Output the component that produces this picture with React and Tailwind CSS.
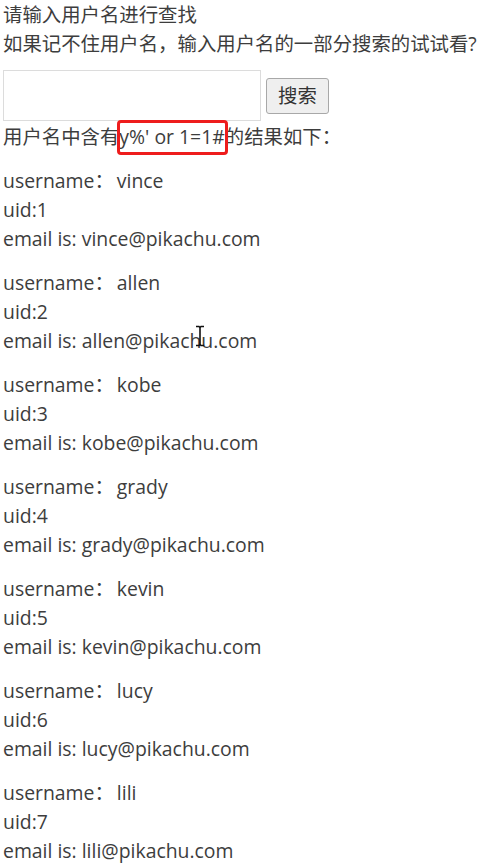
import React from 'react';

const users = [
  { name: 'vince', uid: 1 },
  { name: 'allen', uid: 2 },
  { name: 'kobe', uid: 3 },
  { name: 'grady', uid: 4 },
  { name: 'kevin', uid: 5 },
  { name: 'lucy', uid: 6 },
  { name: 'lili', uid: 7 },
];

const font = { fontFamily: '"Open Sans", "Noto Sans CJK SC", sans-serif' };

// text cursor (I-beam) that sits over the page in the screenshot
function IBeam() {
  return (
    <svg
      className="absolute left-[195px] top-[325px]"
      width="10"
      height="22"
      viewBox="0 0 10 22"
    >
      <path
        d="M1 1.5h3l1 1 1-1h3M5 2.5v17M1 20.5h3l1-1 1 1h3"
        fill="none"
        stroke="#111"
        strokeWidth="1.6"
      />
    </svg>
  );
}

export default function App() {
  return (
    <div
      className="relative bg-white text-[#3d3d3d] text-[19.4px] leading-[29px] pl-[3px] h-[867px] overflow-hidden"
      style={font}
    >
      <p>请输入用户名进行查找</p>
      <p>如果记不住用户名，输入用户名的一部分搜索的试试看?</p>

      <div className="flex items-center mt-[12px] gap-[5px]">
        <input
          type="text"
          className="w-[258px] h-[51px] border border-[#dcdcdc] outline-none"
        />
        <button className="h-[36px] w-[63px] bg-[#efefef] border border-[#a8a8a8] rounded-[3px] text-[19.4px] text-[#333]">
          搜索
        </button>
      </div>

      <p className="mt-[1px]">
        用户名中含有
        <span className="relative">
          y%' or 1=1#
          <span className="absolute left-[-2px] right-[-3px] top-[-3px] bottom-[-5px] border-[3px] border-[#ee1c1c] rounded-[4px]" />
        </span>
        的结果如下：
      </p>

      <div className="mt-[15px] flex flex-col gap-[15px]">
        {users.map((u) => (
          <div key={u.uid}>
            <p>username：<span className="ml-[3px]">{u.name}</span></p>
            <p>uid:{u.uid}</p>
            <p>email is: {u.name}@pikachu.com</p>
          </div>
        ))}
      </div>

      <IBeam />
    </div>
  );
}
